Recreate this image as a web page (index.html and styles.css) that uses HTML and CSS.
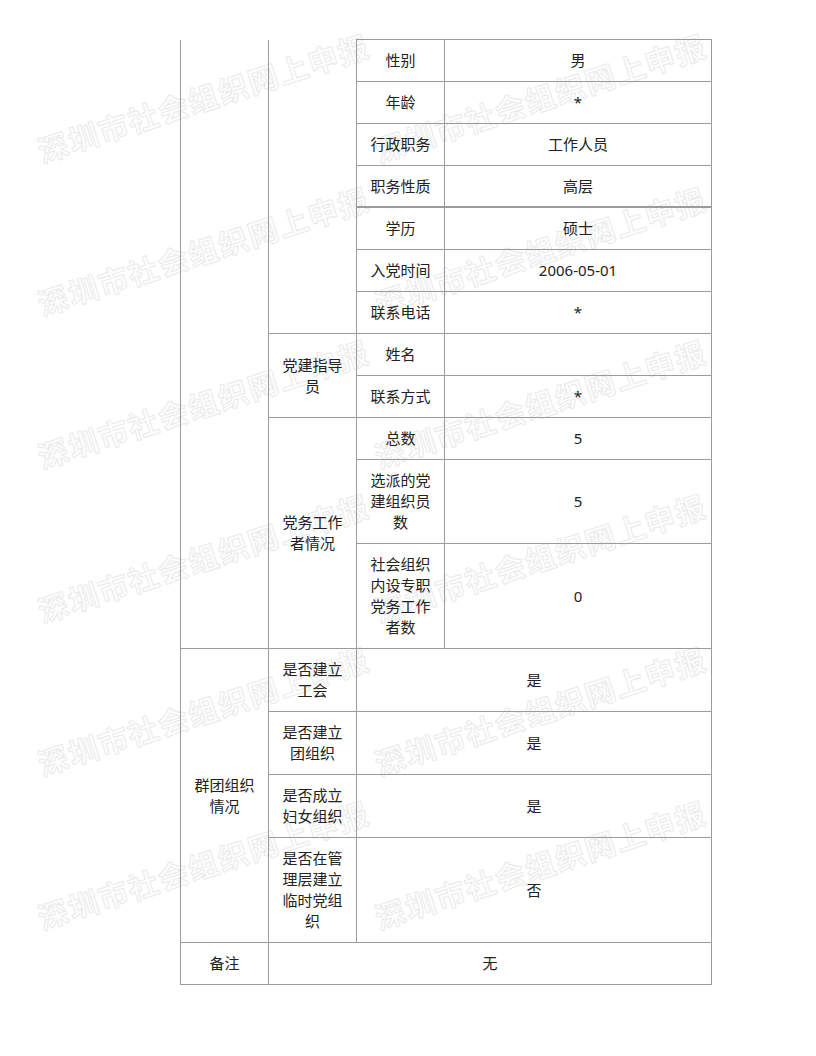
FILE: index.html
```html
<!DOCTYPE html>
<html lang="zh-CN">
<head>
<meta charset="utf-8">
<title>党建信息</title>
<link rel="stylesheet" href="styles.css">
</head>
<body>
<div class="page">
  <table class="info">
    <colgroup>
      <col class="c1"><col class="c2"><col class="c3"><col class="c4">
    </colgroup>
    <tbody>
      <tr>
        <td class="cont" rowspan="12"></td>
        <td class="cont" rowspan="7"></td>
        <td class="top">性别</td><td class="top">男</td>
      </tr>
      <tr><td>年龄</td><td>*</td></tr>
      <tr><td>行政职务</td><td>工作人员</td></tr>
      <tr class="thick"><td>职务性质</td><td>高层</td></tr>
      <tr><td>学历</td><td>硕士</td></tr>
      <tr><td>入党时间</td><td>2006-05-01</td></tr>
      <tr><td>联系电话</td><td>*</td></tr>
      <tr><td rowspan="2">党建指导员</td><td>姓名</td><td></td></tr>
      <tr><td>联系方式</td><td>*</td></tr>
      <tr><td rowspan="3">党务工作者情况</td><td>总数</td><td>5</td></tr>
      <tr><td>选派的党建组织员数</td><td>5</td></tr>
      <tr><td>社会组织内设专职党务工作者数</td><td>0</td></tr>
      <tr><td rowspan="4">群团组织情况</td><td>是否建立工会</td><td colspan="2">是</td></tr>
      <tr><td>是否建立团组织</td><td colspan="2">是</td></tr>
      <tr><td>是否成立妇女组织</td><td colspan="2">是</td></tr>
      <tr><td>是否在管理层建立临时党组织</td><td colspan="2">否</td></tr>
      <tr><td>备注</td><td colspan="3">无</td></tr>
    </tbody>
  </table>
</div>
<div class="watermarks" aria-hidden="true">
  <div class="wm"><span>深圳市社会组织网上申报</span></div>
  <div class="wm"><span>深圳市社会组织网上申报</span></div>
  <div class="wm"><span>深圳市社会组织网上申报</span></div>
  <div class="wm"><span>深圳市社会组织网上申报</span></div>
  <div class="wm"><span>深圳市社会组织网上申报</span></div>
  <div class="wm"><span>深圳市社会组织网上申报</span></div>
  <div class="wm"><span>深圳市社会组织网上申报</span></div>
  <div class="wm"><span>深圳市社会组织网上申报</span></div>
  <div class="wm"><span>深圳市社会组织网上申报</span></div>
  <div class="wm"><span>深圳市社会组织网上申报</span></div>
  <div class="wm"><span>深圳市社会组织网上申报</span></div>
  <div class="wm"><span>深圳市社会组织网上申报</span></div>
</div>
</body>
</html>
```

FILE: styles.css
```css
html, body {
  margin: 0;
  padding: 0;
  background: #fff;
}

body {
  position: relative;
  width: 816px;
  height: 1056px;
  overflow: hidden;
  font-family: "Noto Sans", "Noto Sans CJK SC", sans-serif;
  color: #222;
}

.page {
  padding: 39px 0 0 180px;
  position: relative;
  z-index: 1;
}

.info {
  border-collapse: collapse;
  table-layout: fixed;
  width: 531px;
  font-size: 15px;
  line-height: 21px;
}

.c1, .c2, .c3 { width: 88px; }
.c4 { width: 267px; }

.info td {
  border: 1px solid #9b9b9b;
  padding: 10px 12px;
  text-align: center;
  vertical-align: middle;
  word-break: break-all;
}

.info td.cont {
  border-top: none;
}

.info tr.thick td {
  border-bottom: 2px solid #9b9b9b;
  padding-bottom: 9px;
}

.watermarks {
  position: absolute;
  top: 0;
  left: 0;
  z-index: 0;
  padding: 20px 0 0 35px;
  display: grid;
  grid-template-columns: 337px 337px;
  grid-auto-rows: 153.4px;
  pointer-events: none;
}

.wm {
  display: flex;
  align-items: center;
  justify-content: center;
  white-space: nowrap;
}

.wm span {
  display: block;
  transform: rotate(-18deg);
  font-family: "Noto Sans CJK SC", sans-serif;
  font-weight: 700;
  font-size: 30px;
  letter-spacing: 1.5px;
  color: #fdfdfd;
  -webkit-text-stroke: 1px #ebebeb;
}
```
